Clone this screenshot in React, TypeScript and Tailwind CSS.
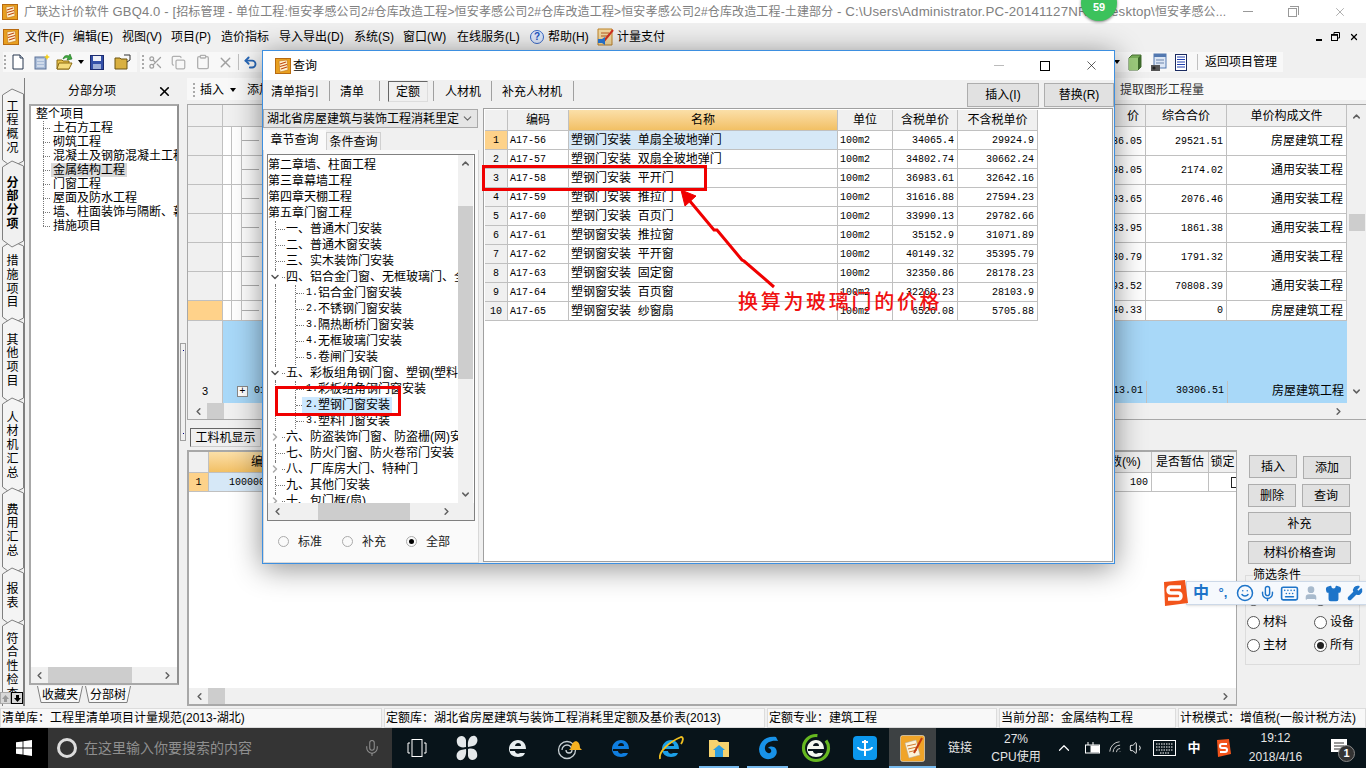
import { Fragment } from "react";
import {
  ChevronDown,
  ChevronLeft,
  ChevronRight,
  ChevronUp,
  Copy,
  Keyboard,
  Mic,
  Scissors,
  Clipboard,
  Shirt,
  Smile,
  User,
  Volume1,
  Wifi,
  Wrench,
  X,
  Undo2,
} from "lucide-react";

const MONO = "font-['Liberation_Mono','Noto_Sans_CJK_SC',monospace] text-[10px]";

function Logo({ size = 16 }: { size?: number }) {
  return (
    <svg width={size} height={size} viewBox="0 0 16 16" className="shrink-0">
      <rect x="0.5" y="0.5" width="15" height="15" fill="#e8a020" stroke="#b86a10" />
      <path d="M4 3 L12 2 L13 12 L5 14 Z" fill="#fff3d0" stroke="#c07018" strokeWidth="0.6" />
      <path d="M5 6 L11 4 M5 8.5 L12 6.5 M6 11 L12 9" stroke="#c04810" strokeWidth="1.2" />
    </svg>
  );
}

function DocIcon() {
  return (
    <svg width="14" height="16" viewBox="0 0 14 16">
      <path d="M2 1 H9 L12 4 V15 H2 Z" fill="#fff" stroke="#26364f" />
      <path d="M9 1 V4 H12" fill="#d5dce8" stroke="#26364f" />
    </svg>
  );
}

function NewIcon() {
  return (
    <svg width="16" height="16" viewBox="0 0 16 16">
      <rect x="1" y="3" width="11" height="12" fill="#a9bcd8" stroke="#5c7298" />
      <path d="M3 6 H10 M3 9 H10 M3 12 H10" stroke="#f4f7fb" />
      <path d="M13 0 L14 2 L16 3 L14 4 L13 6 L12 4 L10 3 L12 2 Z" fill="#f3d020" />
    </svg>
  );
}

function OpenIcon() {
  return (
    <svg width="18" height="18" viewBox="0 0 18 18">
      <path d="M1 7 H6 L7 8 H13 V16 H1 Z" fill="#e9c24c" stroke="#8a6a12" />
      <path d="M3 10 H16 L13 16 H1 Z" fill="#f5dc7c" stroke="#8a6a12" />
      <path d="M7 6 C8 2 11 2 13 3 L14 1 L16 6 L11 7 L12 5 C10 4 9 5 7 6 Z" fill="#3ca83c" stroke="#1b6e1b" strokeWidth="0.6" />
    </svg>
  );
}

function SaveIcon() {
  return (
    <svg width="14" height="15" viewBox="0 0 14 15">
      <rect x="0.5" y="0.5" width="13" height="14" fill="#3350a8" stroke="#1c2c70" />
      <rect x="3" y="1" width="8" height="5" fill="#f0f2f8" />
      <rect x="3" y="9" width="8" height="5" fill="#9fb0d8" />
    </svg>
  );
}

function FolderIcon() {
  return (
    <svg width="17" height="16" viewBox="0 0 17 16">
      <path d="M1 4 H6 L7 5 H13 V15 H1 Z" fill="#d9b040" stroke="#6c5410" />
      <path d="M10 1 H16 V6 L13 8" fill="none" stroke="#333" />
    </svg>
  );
}

function Cube() {
  return (
    <svg width="14" height="17" viewBox="0 0 14 17">
      <path d="M1 4 L4 1 H13 V13 L10 16 H1 Z" fill="#78ad58" stroke="#4a7434" />
      <path d="M1 4 H10 V16 H1 Z" fill="#9ccb7c" />
      <path d="M10 4 L13 1 V13 L10 16 Z" fill="#3e6b2c" />
    </svg>
  );
}

function ServerDoc() {
  return (
    <svg width="16" height="19" viewBox="0 0 16 19">
      <rect x="3" y="1" width="12" height="14" fill="#dce6f4" stroke="#5278b0" />
      <rect x="3" y="1" width="12" height="3" fill="#5278b0" />
      <path d="M5 7 H13 M5 10 H13" stroke="#6b84ac" />
      <rect x="0" y="12" width="9" height="6" fill="#555" />
      <circle cx="3" cy="15" r="1.6" fill="#222" />
    </svg>
  );
}

function ListDoc() {
  return (
    <svg width="12" height="17" viewBox="0 0 12 17">
      <rect x="0.5" y="0.5" width="11" height="16" fill="#fff" stroke="#1a2a60" />
      <path d="M2 3 H10 M2 5.5 H10 M2 8 H10 M2 10.5 H10 M2 13 H10" stroke="#2040b0" />
    </svg>
  );
}

function VTab({ text, h, active }: { text: string; h: number; active?: boolean }) {
  const bottom = h - 1;
  return (
    <div className={`relative -mb-[8px] w-[24px] shrink-0 ${active ? "z-10" : ""}`} style={{ height: h }}>
      <svg className="absolute inset-0" width="24" height={h}>
        <path
          d={`M2.5 7 L12 1 L23.5 6 V${bottom - 6} L12 ${bottom} L2.5 ${bottom - 7} Z`}
          fill={active ? "#f0f0f0" : "#f4f4f4"}
          stroke="#808080"
        />
      </svg>
      <div
        className={`relative flex h-full flex-col items-center justify-center pl-[1px] text-[12px] leading-[13.7px] text-black ${
          active ? "font-bold" : ""
        }`}
      >
        {text.split("").map((c, i) => (
          <span key={i}>{c}</span>
        ))}
      </div>
    </div>
  );
}

function Arrow({ dir }: { dir: "up" | "down" | "left" | "right" }) {
  const cls = "shrink-0 text-[#606060]";
  if (dir === "up") return <ChevronUp size={11} strokeWidth={3.2} className={cls} />;
  if (dir === "down") return <ChevronDown size={11} strokeWidth={3.2} className={cls} />;
  if (dir === "left") return <ChevronLeft size={11} strokeWidth={3.2} className={cls} />;
  return <ChevronRight size={11} strokeWidth={3.2} className={cls} />;
}

function Radio({ checked }: { checked?: boolean }) {
  return (
    <span className="flex h-[13px] w-[13px] shrink-0 items-center justify-center rounded-full border border-[#555] bg-white">
      {checked && <span className="h-[7px] w-[7px] rounded-full bg-[#222]" />}
    </span>
  );
}

const leftTree = ["土石方工程", "砌筑工程", "混凝土及钢筋混凝土工程", "金属结构工程", "门窗工程", "屋面及防水工程", "墙、柱面装饰与隔断、幕墙", "措施项目"];

const gridRows = [
  { h: 29, a: "36.05", b: "29521.51", c: "房屋建筑工程" },
  { h: 29, a: "98.05", b: "2174.02", c: "通用安装工程" },
  { h: 29, a: "93.65", b: "2076.46", c: "通用安装工程" },
  { h: 29, a: "33.95", b: "1861.38", c: "通用安装工程" },
  { h: 29, a: "30.79", b: "1791.32", c: "通用安装工程" },
  { h: 29, a: "93.52", b: "70808.39", c: "通用安装工程" },
  { h: 20, a: "40.33", b: "0", c: "房屋建筑工程" },
];

type TreeRow = { t: string; l: number; n?: string; chev?: "down" | "right"; sel?: boolean };
const quotaTree: TreeRow[] = [
  { t: "第二章墙、柱面工程", l: 0 },
  { t: "第三章幕墙工程", l: 0 },
  { t: "第四章天棚工程", l: 0 },
  { t: "第五章门窗工程", l: 0 },
  { t: "一、普通木门安装", l: 1 },
  { t: "二、普通木窗安装", l: 1 },
  { t: "三、实木装饰门安装", l: 1 },
  { t: "四、铝合金门窗、无框玻璃门、全", l: 1, chev: "down" },
  { t: "铝合金门窗安装", l: 2, n: "1." },
  { t: "不锈钢门窗安装", l: 2, n: "2." },
  { t: "隔热断桥门窗安装", l: 2, n: "3." },
  { t: "无框玻璃门安装", l: 2, n: "4." },
  { t: "卷闸门安装", l: 2, n: "5." },
  { t: "五、彩板组角钢门窗、塑钢(塑料)", l: 1, chev: "down" },
  { t: "彩板组角钢门窗安装", l: 2, n: "1." },
  { t: "塑钢门窗安装", l: 2, n: "2.", sel: true },
  { t: "塑料门窗安装", l: 2, n: "3." },
  { t: "六、防盗装饰门窗、防盗栅(网)安", l: 1, chev: "right" },
  { t: "七、防火门窗、防火卷帘门安装", l: 1 },
  { t: "八、厂库房大门、特种门", l: 1, chev: "right" },
  { t: "九、其他门安装", l: 1 },
  { t: "十、包门框(扇)", l: 1, chev: "right" },
];

const quotaRows = [
  ["A17-56", "塑钢门安装  单扇全玻地弹门", "34065.4", "29924.9"],
  ["A17-57", "塑钢门安装  双扇全玻地弹门", "34802.74", "30662.24"],
  ["A17-58", "塑钢门安装  平开门", "36983.61", "32642.16"],
  ["A17-59", "塑钢门安装  推拉门", "31616.88", "27594.23"],
  ["A17-60", "塑钢门安装  百页门", "33990.13", "29782.66"],
  ["A17-61", "塑钢窗安装  推拉窗", "35152.9", "31071.89"],
  ["A17-62", "塑钢窗安装  平开窗", "40149.32", "35395.79"],
  ["A17-63", "塑钢窗安装  固定窗", "32350.86", "28178.23"],
  ["A17-64", "塑钢窗安装  百页窗", "32268.23", "28103.9"],
  ["A17-65", "塑钢窗安装  纱窗扇", "6526.08", "5705.88"],
];

const menus = [
  ["文件(F)", "w-[48px]"],
  ["编辑(E)", "w-[49px]"],
  ["视图(V)", "w-[49px]"],
  ["项目(P)", "w-[50px]"],
  ["造价指标", "w-[58px]"],
  ["导入导出(D)", "w-[75px]"],
  ["系统(S)", "w-[49px]"],
  ["窗口(W)", "w-[54px]"],
  ["在线服务(L)", "w-[73px]"],
];

const btn = "flex items-center justify-center border border-[#adadad] bg-[#e1e1e1] text-[12px] text-black";
const hcell = "flex shrink-0 items-center justify-center border-r border-b border-[#c0c0c0] bg-[#f0f0f0]";

function Dialog() {
  return (
    <div className="absolute left-[262px] top-[50px] flex h-[514px] w-[853px] flex-col border border-[#3d8fe0] bg-[#f0f0f0] shadow-[0_4px_28px_rgba(0,0,0,0.45)]">
      {/* title */}
      <div className="flex h-[29px] shrink-0 items-center bg-white pl-[12px]">
        <Logo />
        <span className="ml-[2px] text-[12px] text-black">查询</span>
        <div className="ml-auto flex items-center">
          <div className="flex w-[46px] justify-center">
            <div className="h-px w-[10px] bg-[#bbb]" />
          </div>
          <div className="flex w-[46px] justify-center">
            <div className="h-[10px] w-[10px] border border-black" />
          </div>
          <div className="flex w-[46px] justify-center">
            <X size={15} strokeWidth={1} className="text-black" />
          </div>
        </div>
      </div>
      {/* tabs */}
      <div className="flex h-[28px] shrink-0 items-start text-[12px] text-black">
        <span className="ml-[8px] mt-[4px] w-[58px] leading-[16px]">清单指引</span>
        <span className="mt-[1px] h-[20px] w-px bg-[#a0a0a0]" />
        <span className="ml-[10px] mt-[4px] w-[39px] leading-[16px]">清单</span>
        <span className="mt-[1px] h-[20px] w-px bg-[#a0a0a0]" />
        <span className="ml-[8px] mt-[1px] flex h-[21px] w-[40px] items-center justify-center border border-t-[#666] border-l-[#666] border-r-[#ddd] border-b-[#ddd]">
          定额
        </span>
        <span className="ml-[5px] mt-[1px] h-[20px] w-px bg-[#a0a0a0]" />
        <span className="ml-[11px] mt-[4px] w-[46px] leading-[16px]">人材机</span>
        <span className="mt-[1px] h-[20px] w-px bg-[#a0a0a0]" />
        <span className="ml-[10px] mt-[4px] w-[71px] leading-[16px]">补充人材机</span>
        <span className="mt-[1px] h-[20px] w-px bg-[#a0a0a0]" />
        <div className={`${btn} ml-auto mt-[3px] h-[24px] w-[72px] text-[11px]`}>插入(I)</div>
        <div className={`${btn} ml-[5px] mt-[3px] h-[24px] w-[70px] text-[11px]`}>替换(R)</div>
      </div>
      {/* content */}
      <div className="flex min-h-0 flex-1">
        <div className="flex w-[220px] shrink-0 flex-col">
          <div className="mt-px flex h-[19px] w-[215px] items-center justify-between border border-[#aaa] bg-[#e5e5e5] pl-[3px] pr-[3px] text-[12px] text-black">
            <span className="whitespace-nowrap">湖北省房屋建筑与装饰工程消耗里定</span>
            <ChevronDown size={13} className="text-[#666]" />
          </div>
          <div className="mt-[2px] flex h-[20px] items-end text-[12px]">
            <span className="flex h-[20px] w-[63px] items-center justify-center bg-[#fafafa]">章节查询</span>
            <span className="flex h-[18px] w-[55px] items-center justify-center border border-b-0 border-[#d0d0d0]">条件查询</span>
          </div>
          <div className="ml-0 flex w-[216px] flex-1 flex-col border border-t-0 border-[#d8d8d8] bg-[#fafafa] pl-[3px] pt-[4px]">
            <div className="flex h-[367px] w-[208px] flex-col border border-[#808080] bg-white">
              <div className="flex min-h-0 flex-1">
                <div className="min-w-0 flex-1 overflow-hidden pt-[2px]">
                  {quotaTree.map((r) => (
                    <div key={r.t} className="relative h-[16px] whitespace-nowrap text-[12px] leading-[16px] text-black">
                      {r.l >= 1 && <span className="absolute left-[7px] top-0 h-full border-l border-dotted border-[#777]" />}
                      {r.l === 1 && <span className="absolute left-[8px] top-[8px] w-[9px] border-t border-dotted border-[#777]" />}
                      {r.l === 2 && (
                        <>
                          <span className="absolute left-[27px] top-0 h-full border-l border-dotted border-[#777]" />
                          <span className="absolute left-[28px] top-[8px] w-[8px] border-t border-dotted border-[#777]" />
                        </>
                      )}
                      {r.chev && (
                        <span className="absolute left-[1px] top-[2px] bg-white">
                          {r.chev === "down" ? (
                            <ChevronDown size={12} strokeWidth={3} className="text-[#555]" />
                          ) : (
                            <ChevronRight size={12} strokeWidth={3} className="text-[#aaa]" />
                          )}
                        </span>
                      )}
                      {r.l === 0 && <span>{r.t}</span>}
                      {r.l === 1 && <span className="absolute left-[18px]">{r.t}</span>}
                      {r.l === 2 && (
                        <span className={`absolute left-[34px] flex pl-[4px] pr-[2px] ${r.sel ? "bg-[#cce8ff]" : ""}`}>
                          <span className={`${MONO} w-[12px]`}>{r.n}</span>
                          <span>{r.t}</span>
                        </span>
                      )}
                    </div>
                  ))}
                </div>
                <div className="mr-px flex w-[15px] shrink-0 flex-col items-center bg-[#f0f0f0] pb-[3px] pt-[3px]">
                  <Arrow dir="up" />
                  <div className="mt-[37px] h-[173px] w-full bg-[#cdcdcd]" />
                  <div className="mt-auto">
                    <Arrow dir="down" />
                  </div>
                </div>
              </div>
              <div className="flex h-[17px] shrink-0 items-center bg-[#f0f0f0] pl-[4px] pr-[22px]">
                <Arrow dir="left" />
                <div className="ml-[35px] h-full w-[92px] bg-[#cdcdcd]" />
                <div className="ml-auto">
                  <Arrow dir="right" />
                </div>
              </div>
            </div>
            <div className="flex flex-1 items-center pl-[11px] text-[12px] text-[#222]">
              <span className="h-[11px] w-[11px] rounded-full border border-[#aaa]" />
              <span className="ml-[9px] w-[44px]">标准</span>
              <span className="h-[11px] w-[11px] rounded-full border border-[#aaa]" />
              <span className="ml-[9px] w-[44px]">补充</span>
              <span className="flex h-[11px] w-[11px] items-center justify-center rounded-full border border-[#aaa]">
                <span className="h-[5px] w-[5px] rounded-full bg-black" />
              </span>
              <span className="ml-[9px]">全部</span>
            </div>
          </div>
        </div>
        {/* quota table */}
        <div className="mb-px mr-px min-w-0 flex-1 border border-[#a0a0a0] bg-white pl-px pt-px text-[12px] text-black">
          <div className="flex h-[21px]">
            <div className={`${hcell} w-[23px]`} />
            <div className={`${hcell} w-[61px]`}>编码</div>
            <div className="flex w-[269px] shrink-0 items-center justify-center border-r border-b border-[#c0c0c0] bg-gradient-to-b from-[#fbdfa8] to-[#f2c064]">名称</div>
            <div className={`${hcell} w-[55px]`}>单位</div>
            <div className={`${hcell} w-[65px]`}>含税单价</div>
            <div className={`${hcell} w-[80px]`}>不含税单价</div>
          </div>
          {quotaRows.map((r, i) => (
            <div key={r[0]} className="flex h-[19px]">
              <div className={`${hcell} w-[23px] ${MONO} ${i === 0 ? "!bg-[#fdd28a]" : ""}`}>{i + 1}</div>
              <div className={`flex w-[61px] shrink-0 items-center border-r border-b border-[#c0c0c0] pl-[2px] ${MONO}`}>{r[0]}</div>
              <div className={`flex w-[269px] shrink-0 items-center whitespace-pre border-r border-b border-[#c0c0c0] pl-[2px] ${i === 0 ? "bg-[#d6e8f7]" : ""}`}>{r[1]}</div>
              <div className={`flex w-[55px] shrink-0 items-center border-r border-b border-[#c0c0c0] pl-[2px] ${MONO}`}>100m2</div>
              <div className={`flex w-[65px] shrink-0 items-center justify-end border-r border-b border-[#c0c0c0] pr-[3px] ${MONO}`}>{r[2]}</div>
              <div className={`flex w-[80px] shrink-0 items-center justify-end border-r border-b border-[#c0c0c0] pr-[3px] ${MONO}`}>{r[3]}</div>
            </div>
          ))}
        </div>
      </div>
    </div>
  );
}

function Annotations() {
  return (
    <>
      <div className="absolute left-[275px] top-[386px] h-[30px] w-[126px] border-[3px] border-[#f00000]" />
      <div className="absolute left-[482px] top-[165px] h-[26px] w-[225px] border-[3px] border-[#f00000]" />
      <svg className="absolute left-[670px] top-[180px]" width="120" height="120" viewBox="0 0 120 120">
        <path d="M14 14 L44 50 L47 50 L72 80 L74 81 L104 107" fill="none" stroke="#f00000" strokeWidth="3" />
        <path d="M11 10 L26 16 L15 26 Z" fill="#f00000" stroke="#f00000" />
      </svg>
      <div className="absolute left-[738px] top-[290px] whitespace-nowrap font-['Liberation_Serif','Noto_Sans_CJK_SC',serif] text-[20px] font-medium leading-[24px] tracking-[2.7px] text-[#f01010]">
        换算为玻璃门的价格
      </div>
    </>
  );
}

function Sogou() {
  return (
    <div className="absolute left-[1160px] top-[578px] flex h-[30px] w-[206px] items-center">
      <svg width="29" height="29" viewBox="0 0 29 29" className="relative z-10 -mr-[3px] shrink-0">
        <path d="M4 3 L25 1 L28 24 L5 27 Z" fill="#f2541b" />
        <path d="M21 8 H11 Q8 8 8 11 Q8 14 11 14 H18 Q21 14 21 17 Q21 20 18 20 H8" fill="none" stroke="#fff" strokeWidth="3.4" />
      </svg>
      <div className="flex h-[24px] flex-1 items-center border border-[#cdd9e8] bg-[#f6f9fd] pl-[3px] text-[#1d74c9] shadow-sm">
        <span className="w-[22px] text-center text-[16px] font-bold leading-[20px]">中</span>
        <span className="w-[22px] text-center text-[13px] font-bold leading-[16px]">°,</span>
        <span className="flex w-[22px] justify-center"><Smile size={18} /></span>
        <span className="flex w-[22px] justify-center"><Mic size={17} /></span>
        <span className="flex w-[22px] justify-center"><Keyboard size={19} /></span>
        <span className="flex w-[22px] justify-center"><User size={16} className="text-[#a8bacd]" fill="#a8bacd" /></span>
        <span className="flex w-[22px] justify-center"><Shirt size={17} fill="#1d74c9" /></span>
        <span className="flex w-[22px] justify-center"><Wrench size={16} fill="#1d74c9" /></span>
      </div>
    </div>
  );
}

function Taskbar() {
  const eIcon = (c: string) => (
    <svg width="22" height="22" viewBox="0 0 22 22">
      <path d="M3 12 H19 C19 6 15 3 11 3 C6 3 2 7 2 12 C2 17 6 20 11 20 C14 20 17 19 18 16 H13 C12 17 10 17 9 16 C8 15 8 14 8 14 H3 Z M8 9 C8 7 10 6 11 6 C13 6 14 7 14 9 Z" fill={c} fillRule="evenodd" />
    </svg>
  );
  const cells: [string, React.ReactNode][] = [
    ["w-[49px]", (
      <svg width="20" height="18" viewBox="0 0 20 18" fill="none" stroke="#fff">
        <rect x="5" y="0.5" width="10" height="17" />
        <path d="M3 4 H1 V14 H3 M17 4 H19 V14 H17" />
      </svg>
    )],
    ["w-[51px]", (
      <svg width="22" height="26" viewBox="0 0 22 26" fill="#e4e8ea">
        <path d="M10 12 C2 14 0 8 1 4 C3 0 9 0 10 5 Z M12 12 C11 4 15 0 19 1 C23 3 22 10 17 11 Z M12 14 C20 12 22 18 21 22 C19 26 13 26 12 21 Z M10 14 C11 22 7 26 3 25 C-1 23 0 16 5 15 Z" />
      </svg>
    )],
    ["w-[52px]", eIcon("#e8eef0")],
    ["w-[52px]", (
      <svg width="28" height="24" viewBox="0 0 28 24">
        <circle cx="11" cy="14" r="8.5" fill="none" stroke="#c8d0d4" strokeWidth="1.3" />
        <path d="M6 14 A5 5 0 1 1 16 14 A3 3 0 0 1 10 14" fill="none" stroke="#c8d0d4" strokeWidth="1.3" />
        <path d="M15 12 C16 3 24 3 24 12 L26 14 H13 Z" fill="#f5b020" />
      </svg>
    )],
    ["w-[50px]", eIcon("#0f7ee0")],
    ["w-[49px]", (
      <div className="relative">
        {eIcon("#1ca0e8")}
        <svg className="absolute -left-[3px] -top-[3px]" width="28" height="28" viewBox="0 0 28 28">
          <path d="M3 25 C1 18 12 8 24 3 C27 3 26 7 24 10" fill="none" stroke="#f0c020" strokeWidth="1.8" />
        </svg>
      </div>
    )],
    ["w-[48px]", (
      <svg width="22" height="22" viewBox="0 0 22 22">
        <path d="M1 3 H9 L11 5 H21 V20 H1 Z" fill="#f6d36e" />
        <rect x="7" y="12" width="8" height="8" fill="#2d9ee0" />
        <path d="M5 13 L11 8 L17 13" fill="#2d9ee0" />
      </svg>
    )],
    ["w-[49px]", (
      <svg width="24" height="26" viewBox="0 0 24 26">
        <path d="M20 2 C10 1 4 6 3 14 C3 21 8 25 14 24 C20 23 22 18 20 14 C18 11 14 11 12 13 C14 13 16 15 15 17 C13 20 8 17 9 12 C10 7 16 5 22 6 Z" fill="#1892e8" />
      </svg>
    )],
    ["w-[48px]", (
      <div className="relative">
        {eIcon("#f4f8f0")}
        <svg className="absolute -left-[4px] -top-[4px]" width="30" height="30" viewBox="0 0 30 30">
          <circle cx="15" cy="15" r="12.5" fill="none" stroke="#66b820" strokeWidth="3.2" strokeDasharray="60 10" />
        </svg>
      </div>
    )],
    ["w-[49px]", (
      <svg width="24" height="24" viewBox="0 0 24 24">
        <rect width="24" height="24" rx="4" fill="#0b97ee" />
        <path d="M12 4 V20 M5 11 C5 15 19 15 19 11 M9 6 H15" fill="none" stroke="#fff" strokeWidth="2" />
      </svg>
    )],
    ["w-[47px] bg-[#3d4143]", (
      <svg width="25" height="27" viewBox="0 0 25 27">
        <rect x="0.5" y="0.5" width="24" height="26" rx="2" fill="#f0a428" stroke="#fff" strokeWidth="0.5" />
        <path d="M5 8 L16 5 L20 20 L9 23 Z" fill="#fdf3d8" stroke="#aaa" strokeWidth="0.5" />
        <path d="M7 11 L16 9 M8 14 L17 12 M9 17 L17 15" stroke="#d07a30" />
        <path d="M14 18 L22 3" stroke="#c23a10" strokeWidth="2" />
      </svg>
    )],
  ];
  const underlines = ["", "", "", "", "", "", "left-[4px] right-[4px]", "left-[4px] right-[4px]", "", "", "left-0 right-0"];
  return (
    <div className="flex h-[40px] shrink-0 items-stretch bg-[#08141a] text-white">
      <div className="flex w-[48px] items-center justify-center bg-black">
        <svg width="16" height="16" viewBox="0 0 16 16" fill="#fff">
          <path d="M0 2.3 L6.6 1.4 V7.5 H0 Z M7.4 1.3 L16 0 V7.5 H7.4 Z M0 8.5 H6.6 V14.6 L0 13.7 Z M7.4 8.5 H16 V16 L7.4 14.7 Z" />
        </svg>
      </div>
      <div className="flex w-[344px] items-center bg-[#343434] pl-[9px] pr-[11px]">
        <span className="h-[20px] w-[20px] rounded-full border-[3px] border-[#dcdcdc]" />
        <span className="ml-[7px] text-[14px] leading-[16px] text-[#8f8f8f]">在这里输入你要搜索的内容</span>
        <Mic size={18} strokeWidth={1.4} className="ml-auto text-[#8f8f8f]" />
      </div>
      {cells.map(([w, icon], i) => (
        <div key={i} className={`relative flex items-center justify-center ${w}`}>
          {icon}
          {underlines[i] && <span className={`absolute bottom-0 h-[2px] bg-[#76b9ed] ${underlines[i]}`} />}
        </div>
      ))}
      <div className="flex w-[48px] items-center justify-center text-[12px] text-[#e6e6e6]">链接</div>
      <div className="flex w-[64px] flex-col items-center justify-center text-[12px] leading-[18px] text-[#e6e6e6]">
        <span>27%</span>
        <span>CPU使用</span>
      </div>
      <div className="flex w-[32px] items-center justify-center">
        <ChevronUp size={18} strokeWidth={1.6} />
      </div>
      <div className="flex w-[24px] items-center justify-center">
        <svg width="17" height="14" viewBox="0 0 17 14" fill="none" stroke="#fff">
          <path d="M4 1 V4 M9 1 V4" />
          <rect x="1.5" y="4" width="14" height="8" />
          <rect x="7" y="5" width="8" height="6" fill="#fff" />
        </svg>
      </div>
      <div className="flex w-[23px] items-center justify-center">
        <Wifi size={16} strokeWidth={1.4} className="-rotate-45 text-[#c8c8c8]" />
      </div>
      <div className="flex w-[19px] items-center justify-center">
        <Volume1 size={16} strokeWidth={1.4} />
      </div>
      <div className="flex w-[37px] items-center justify-center">
        <svg width="23" height="16" viewBox="0 0 23 16" fill="none" stroke="#fff">
          <rect x="0.5" y="0.5" width="22" height="15" />
          <path d="M3 4 H20 M3 7 H20 M3 10 H20 M7 13 H16" strokeDasharray="1.5 1" />
        </svg>
      </div>
      <div className="flex w-[22px] items-center justify-center text-[13px] font-bold">中</div>
      <div className="flex w-[35px] items-center justify-center">
        <svg width="16" height="18" viewBox="0 0 16 18">
          <path d="M2 1 L14 0 L16 15 L3 18 Z" fill="#f2541b" />
          <path d="M12 5 H7 Q5 5 5 7 Q5 9 7 9 H10 Q12 9 12 11 Q12 13 10 13 H5" fill="none" stroke="#fff" strokeWidth="2" />
        </svg>
      </div>
      <div className="flex w-[71px] flex-col items-center justify-center text-[12px] leading-[19px] text-[#e6e6e6]">
        <span>19:12</span>
        <span>2018/4/16</span>
      </div>
      <div className="relative flex w-[55px] items-center justify-center">
        <svg width="16" height="16" viewBox="0 0 16 16" className="-mt-[2px]">
          <path d="M0 0 H16 V13 H0 Z" fill="#fff" />
          <path d="M3 4 H13 M3 7 H13 M3 10 H10" stroke="#333" />
        </svg>
        <span className="absolute left-[27px] top-[17px] flex h-[17px] w-[17px] items-center justify-center rounded-full border border-[#888] bg-[#333] text-[11px] font-bold">1</span>
      </div>
    </div>
  );
}

export default function App() {
  return (
    <div className="relative flex h-[768px] w-[1366px] flex-col overflow-hidden bg-[#f0f0f0] font-['Liberation_Sans','Noto_Sans_CJK_SC',sans-serif]">
      {/* title bar */}
      <div className="flex h-[23px] shrink-0 items-center bg-white pl-[2px]">
        <Logo />
        <span className="ml-[6px] w-[1204px] overflow-hidden whitespace-nowrap text-[12px] tracking-[0.15px] text-[#808080]">
          广联达计价软件 <span className="text-[13px]">GBQ4.0 - [</span>招标管理 - 单位工程:恒安孝感公司2#仓库改造工程&gt;恒安孝感公司2#仓库改造工程&gt;恒安孝感公司2#仓库改造工程-土建部分 <span className="text-[13.3px]">- C:\Users\Administrator.PC-20141127NRH\Desktop\</span>恒安孝感公...
        </span>
        <div className="ml-auto flex items-center pr-[19px]">
          <div className="mr-[35px] h-px w-[10px] bg-[#999]" />
          <div className="relative mr-[36px] mt-[2px] h-[9px] w-[9px] border border-[#999]">
            <span className="absolute -right-[3px] -top-[3px] h-[9px] w-[9px] border-r border-t border-[#999]" />
          </div>
          <X size={14} strokeWidth={1} className="text-[#777]" />
        </div>
      </div>
      {/* menu */}
      <div className="flex h-[27px] shrink-0 items-center pl-[3px] text-[12px] text-black">
        <Logo />
        <span className="w-[6px]" />
        {menus.map(([m, w]) => (
          <span key={m} className={w}>
            {m}
          </span>
        ))}
        <span className="flex h-[14px] w-[14px] items-center justify-center rounded-full border border-[#3868c8] bg-[#dfe8fb] text-[10px] font-bold text-[#2050c0]">?</span>
        <span className="ml-[4px] w-[49px]">帮助(H)</span>
        <svg width="18" height="18" viewBox="0 0 18 18" className="mr-[2px]">
          <path d="M1 1 H15 V17 H1 Z" fill="#f3d9a0" stroke="#c08428" />
          <path d="M4 5 H12 M4 8 H11" stroke="#b85a20" />
          <path d="M7 13 L16 2" stroke="#d03020" strokeWidth="2" />
          <path d="M1 11 H5 L8 9 V17 L5 15 H1 Z" fill="#2878d8" />
        </svg>
        <span>计量支付</span>
        <div className="ml-auto flex items-center gap-[9px] pr-[7px]">
          <span className="mt-[6px] h-[2px] w-[6px] bg-black" />
          <svg width="9" height="9" viewBox="0 0 9 9" fill="none" stroke="#000">
            <rect x="0.5" y="2.5" width="6" height="6" />
            <path d="M3 2.5 V0.5 H8.5 V6 H6.5" />
            <path d="M0.5 3 H6.5" strokeWidth="1.6" />
          </svg>
          <X size={10} strokeWidth={3} className="text-black" />
        </div>
      </div>
      {/* toolbar */}
      <div className="flex h-[28px] shrink-0 items-start pl-[3px] pt-[2px]">
        <div className="flex h-[20px] w-[134px] items-center bg-[#f8f8f8] pl-[1px]">
          <span className="h-[14px] w-0 border-l-2 border-dotted border-[#aaa]" />
          <span className="ml-[5px] w-[23px]"><DocIcon /></span>
          <span className="w-[22px]"><NewIcon /></span>
          <OpenIcon />
          <span className="ml-[4px] mr-[6px] h-0 w-0 border-x-[3px] border-t-[4px] border-x-transparent border-t-black" />
          <span className="w-[24px]"><SaveIcon /></span>
          <FolderIcon />
        </div>
        <div className="ml-[3px] flex h-[20px] flex-1 items-center bg-[#f8f8f8] pl-[2px]">
          <span className="h-[14px] w-0 border-l-2 border-dotted border-[#aaa]" />
          <Scissors size={15} className="ml-[4px] text-[#a0a0a0]" />
          <Copy size={15} className="ml-[8px] text-[#b0b0b0]" />
          <Clipboard size={16} className="ml-[9px] text-[#b0b0b0]" />
          <X size={17} className="ml-[6px] text-[#a0a0a0]" />
          <span className="ml-[4px] h-[16px] w-px bg-[#c0c0c0]" />
          <Undo2 size={15} strokeWidth={3} className="ml-[4px] text-[#2868b8]" />
        </div>
        <div className="flex h-[20px] items-center bg-[#f8f8f8] pr-[6px] text-[12px]">
          <span className="mr-[8px] h-0 w-0 border-x-[3px] border-t-[4px] border-x-transparent border-t-black" />
          <span className="w-[23px]"><Cube /></span>
          <span className="w-[24px]"><ServerDoc /></span>
          <span className="w-[22px]"><ListDoc /></span>
          <span className="mr-[7px] h-[16px] w-px bg-[#c0c0c0]" />
          <span>返回项目管理</span>
        </div>
        <div className="w-[83px]" />
      </div>
      {/* body */}
      <div className="flex h-[628px] shrink-0">
        {/* vertical tabs */}
        <div className="relative flex w-[25px] shrink-0 flex-col overflow-hidden border-r border-[#808080] pt-[10px]">
          <VTab text="工程概况" h={80} />
          <VTab text="分部分项" h={88} active />
          <VTab text="措施项目" h={85} />
          <VTab text="其他项目" h={88} />
          <VTab text="人材机汇总" h={98} />
          <VTab text="费用汇总" h={88} />
          <VTab text="报表" h={60} />
          <VTab text="符合性检查" h={96} />
          <div className="absolute bottom-[2px] left-0 z-20 flex">
            <span className="flex h-[12px] w-[11px] items-center justify-center border border-[#aaa] bg-[#d8d8d8]">
              <svg width="7" height="7" viewBox="0 0 7 7" fill="#999"><path d="M3.5 0 L7 4 H5 V7 H2 V4 H0 Z" /></svg>
            </span>
            <span className="flex h-[12px] w-[12px] items-center justify-center border border-black bg-[#d8d8d8]">
              <svg width="7" height="7" viewBox="0 0 7 7" fill="#000"><path d="M3.5 7 L7 3 H5 V0 H2 V3 H0 Z" /></svg>
            </span>
          </div>
        </div>
        {/* left panel */}
        <div className="relative flex w-[155px] shrink-0 flex-col">
          <div className="flex h-[26px] shrink-0 items-center pl-[43px] text-[12px] text-black">
            <span>分部分项</span>
            <X size={15} strokeWidth={2.6} className="ml-[41px] text-black" />
          </div>
          <div className="ml-[4px] flex h-[581px] w-[150px] flex-col border-2 border-[#a8a8a8] border-r-[#909090] bg-white text-[12px] leading-[14px] text-black">
            <div className="min-h-0 flex-1 overflow-hidden pl-[5px] pt-[1px]">
              <div className="whitespace-nowrap">整个项目</div>
              <div className="relative ml-[7px] w-[165px]">
                <span className="absolute bottom-[7px] left-0 top-0 border-l border-dotted border-[#777]" />
                {leftTree.map((t) => (
                  <div key={t} className="flex h-[14px] items-center whitespace-nowrap">
                    <span className="w-[7px] border-t border-dotted border-[#777]" />
                    <span className={`ml-[1px] px-[2px] ${t === "金属结构工程" ? "bg-[#d9d9d9]" : ""}`}>{t}</span>
                  </div>
                ))}
              </div>
            </div>
            <div className="flex h-[16px] shrink-0 items-center bg-[#f0f0f0] pl-[3px] pr-[4px]">
              <Arrow dir="left" />
              <div className="ml-[3px] h-full w-[84px] bg-[#cdcdcd]" />
              <div className="ml-auto">
                <Arrow dir="right" />
              </div>
            </div>
          </div>
          <div className="ml-[12px] mt-[1px] flex h-[18px] items-start gap-[2px] text-[12px] text-black">
            {["收藏夹", "分部树"].map((t) => (
              <div key={t} className="relative flex h-[17px] w-[46px] items-center justify-center">
                <svg className="absolute inset-0" width="46" height="17">
                  <path d="M0.5 0 L4 16.5 H42 L45.5 0" fill="#f8f8f8" stroke="#808080" />
                </svg>
                <span className="relative">{t}</span>
              </div>
            ))}
          </div>
        </div>
        {/* splitter */}
        <div className="flex w-[7px] shrink-0 items-center">
          <div className="flex h-[98px] w-[6px] flex-col items-center justify-between border border-[#a0a0a0] bg-[#f0f0f0] py-[6px]">
            <span className="h-px w-px bg-[#000080]" />
            <span className="h-px w-px bg-[#000080]" />
          </div>
        </div>
        {/* main */}
        <div className="flex min-w-0 flex-1 flex-col">
          <div className="flex h-[22px] shrink-0 items-center bg-[#f8f8f8] pl-[6px] pt-[2px] text-[12px] text-black">
            <span className="h-[14px] w-0 border-l-2 border-dotted border-[#aaa]" />
            <span className="ml-[5px]">插入</span>
            <span className="ml-[6px] h-0 w-0 border-x-[3px] border-t-[4px] border-x-transparent border-t-black" />
            <span className="ml-[11px]">添加</span>
            <span className="ml-auto mr-[162px] text-[#333]">提取图形工程量</span>
          </div>
          {/* upper grid */}
          <div className="ml-0 mt-[4px] flex h-[316px] shrink-0 flex-col border-y border-l border-[#a8a8a8] text-[12px] text-black">
            <div className="flex min-h-0 flex-1">
              <div className="min-w-0 flex-1">
                <div className="flex h-[22px]">
                  <div className={`${hcell} w-[35px]`} />
                  <div className={`${hcell} flex-1`} />
                  <div className={`${hcell} w-[37px] justify-end pr-[6px]`}>价</div>
                  <div className={`${hcell} w-[81px]`}>综合合价</div>
                  <div className={`${hcell} w-[120px]`}>单价构成文件</div>
                </div>
                {gridRows.map((r, i) => (
                  <div key={i} className="flex" style={{ height: r.h }}>
                    <div className={`w-[35px] shrink-0 border-r border-b border-[#c0c0c0] ${i === 6 ? "bg-[#ffd28a]" : "bg-[#f0f0f0]"}`} />
                    <div className="w-[9px] shrink-0 border-r border-b border-[#c0c0c0] bg-white" />
                    <div className="w-[10px] shrink-0 border-r border-b border-[#c0c0c0] bg-white" />
                    <div className="flex-1 border-b border-[#c0c0c0] bg-white">
                      <div className="flex h-1/2 w-[17px] border-b border-[#b0b0b0]" />
                    </div>
                    <div className={`flex w-[37px] shrink-0 items-center justify-end border-r border-b border-[#c0c0c0] bg-white pr-[3px] ${MONO}`}>{r.a}</div>
                    <div className={`flex w-[81px] shrink-0 items-center justify-end border-r border-b border-[#c0c0c0] bg-white pr-[3px] ${MONO}`}>{r.b}</div>
                    <div className="flex w-[120px] shrink-0 items-center justify-end border-r border-b border-[#c0c0c0] bg-white pr-[3px]">{r.c}</div>
                  </div>
                ))}
                <div className="flex h-[82px] items-end bg-[#a8d8f8] leading-[20px]">
                  <div className="flex h-full w-[35px] shrink-0 items-end justify-center border-r border-[#c0c0c0] bg-[#f0f0f0] pb-[2px] text-[11px]">3</div>
                  <div className="flex flex-1 items-center pb-[2px] pl-[14px]">
                    <span className="flex h-[11px] w-[11px] items-center justify-center border border-[#888] bg-white text-[10px] leading-[10px]">+</span>
                    <span className={`ml-[6px] ${MONO}`}>01</span>
                  </div>
                  <div className={`w-[37px] shrink-0 pb-[2px] pr-[3px] text-right ${MONO}`}>13.01</div>
                  <div className={`w-[81px] shrink-0 border-l border-[#c0c0c0] pb-[2px] pr-[3px] text-right ${MONO}`}>30306.51</div>
                  <div className="w-[120px] shrink-0 border-l border-[#c0c0c0] pb-[2px] pr-[3px] text-right">房屋建筑工程</div>
                </div>
              </div>
              <div className="flex w-[19px] shrink-0 flex-col items-center bg-[#f0f0f0] py-[6px]">
                <Arrow dir="up" />
                <div className="mt-[92px] h-[17px] w-[16px] bg-[#cdcdcd]" />
                <div className="mt-auto">
                  <Arrow dir="down" />
                </div>
              </div>
            </div>
            <div className="flex h-[16px] shrink-0 items-center bg-[#f0f0f0] pl-[5px] pr-[22px]">
              <Arrow dir="left" />
              <div className="ml-[3px] h-full w-[17px] bg-[#cdcdcd]" />
              <div className="ml-auto">
                <Arrow dir="right" />
              </div>
            </div>
          </div>
          {/* lower tab */}
          <div className="ml-[3px] mt-[8px] flex h-[19px] w-[71px] shrink-0 items-center justify-center border border-b-[#ccc] border-l-[#666] border-r-[#ccc] border-t-[#666] text-[12px] text-black">
            工料机显示
          </div>
          <div className="mt-[3px] flex min-h-0 flex-1">
            <div className="flex w-[1050px] shrink-0 flex-col border-2 border-r border-[#a8a8a8] bg-white text-[12px] text-black">
              <div className="flex h-[21px] shrink-0">
                <div className={`${hcell} w-[20px]`} />
                <div className="flex flex-1 items-center border-b border-[#c0c0c0] bg-gradient-to-b from-[#fbdfa8] to-[#f2c064] pl-[42px]">编码</div>
                <div className={`${hcell} w-[42px] justify-start`}>数(%)</div>
                <div className={`${hcell} w-[57px]`}>是否暂估</div>
                <div className={`${hcell} w-[27px] !border-r-0`}>锁定</div>
              </div>
              <div className="flex h-[19px] shrink-0">
                <div className={`flex w-[20px] shrink-0 items-center justify-center border-r border-b border-[#c0c0c0] bg-[#fdd28a] ${MONO}`}>1</div>
                <div className={`flex flex-1 items-center border-b border-[#c0c0c0] bg-[#d6e8f7] pl-[20px] ${MONO}`}>100000</div>
                <div className={`flex w-[42px] shrink-0 items-center justify-end border-r border-b border-[#c0c0c0] pr-[3px] ${MONO}`}>100</div>
                <div className="w-[57px] shrink-0 border-r border-b border-[#c0c0c0]" />
                <div className="flex w-[27px] shrink-0 items-center justify-end overflow-hidden border-b border-[#c0c0c0]">
                  <span className="h-[11px] w-[5px] border-y border-l border-[#222]" />
                </div>
              </div>
              <div className="flex-1" />
              <div className="flex h-[16px] shrink-0 items-center bg-[#f0f0f0] pl-[5px] pr-[5px]">
                <Arrow dir="left" />
                <div className="ml-[3px] h-full w-[17px] bg-[#cdcdcd]" />
                <div className="ml-auto">
                  <Arrow dir="right" />
                </div>
              </div>
            </div>
            {/* right buttons */}
            <div className="flex flex-1 flex-col pt-[5px] text-[12px] text-black">
              <div className="flex pl-[12px]">
                <div className={`${btn} h-[23px] w-[48px]`}>插入</div>
                <div className={`${btn} ml-[6px] mt-px h-[23px] w-[48px]`}>添加</div>
              </div>
              <div className="mt-[5px] flex pl-[11px]">
                <div className={`${btn} h-[23px] w-[48px]`}>删除</div>
                <div className={`${btn} ml-[6px] h-[23px] w-[48px]`}>查询</div>
              </div>
              <div className={`${btn} ml-[11px] mt-[5px] h-[23px] w-[103px]`}>补充</div>
              <div className={`${btn} ml-[11px] mt-[6px] h-[23px] w-[103px]`}>材料价格查询</div>
              <div className="relative ml-[8px] mt-[11px] h-[90px] w-[115px] border border-[#dcdcdc]">
                <span className="absolute -top-[9px] left-[7px] bg-[#f0f0f0] leading-[16px]">筛选条件</span>
                <div className="mt-[16px] grid grid-cols-[67px_1fr] gap-y-[9px] pl-[1px] leading-[14px]">
                  {[["人工", false], ["机械", false], ["材料", false], ["设备", false], ["主材", false], ["所有", true]].map(([t, c]) => (
                    <Fragment key={t as string}>
                      <span className="flex items-center gap-[3px]">
                        <Radio checked={c as boolean} />
                        {t as string}
                      </span>
                    </Fragment>
                  ))}
                </div>
              </div>
            </div>
          </div>
        </div>
      </div>
      <div className="h-[2px] shrink-0" />
      {/* status bar */}
      <div className="flex h-[20px] shrink-0 gap-[2px] text-[12px] text-black">
        {[
          ["清单库：工程里清单项目计量规范(2013-湖北)", "w-[382px]"],
          ["定额库：湖北省房屋建筑与装饰工程消耗里定额及基价表(2013)", "w-[381px]"],
          ["定额专业：建筑工程", "w-[230px]"],
          ["当前分部：金属结构工程", "w-[177px]"],
          ["计税模式：增值税(一般计税方法)", "flex-1"],
        ].map(([t, w]) => (
          <div key={t} className={`flex items-center overflow-hidden whitespace-nowrap border border-[#dcdcdc] bg-[#f8f8f8] pl-px ${w}`}>
            {t}
          </div>
        ))}
      </div>
      <Taskbar />

      {/* overlays */}
      <Dialog />
      <Annotations />
      <Sogou />
      <div className="absolute left-[1081px] -top-[15px] flex h-[36px] w-[36px] items-end justify-center rounded-full bg-[#3cc25c] pb-[8px] text-[11px] font-bold leading-[12px] text-white shadow-[0_1px_3px_rgba(0,0,0,0.5)]">
        59
      </div>
    </div>
  );
}
